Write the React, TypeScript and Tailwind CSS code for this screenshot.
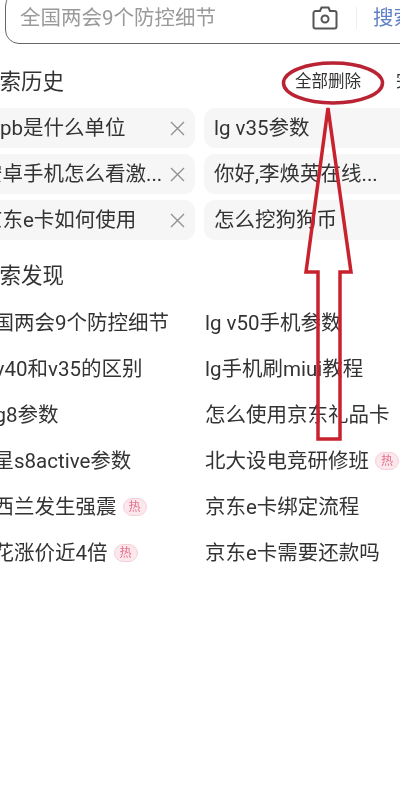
const history = [
  ["mpb是什么单位", "lg v35参数"],
  ["安卓手机怎么看激...", "你好,李焕英在线..."],
  ["京东e卡如何使用", "怎么挖狗狗币"],
];

const found: [string, boolean, string, boolean][] = [
  ["全国两会9个防控细节", false, "lg v50手机参数", false],
  ["lg v40和v35的区别", false, "lg手机刷miui教程", false],
  ["lg g8参数", false, "怎么使用京东礼品卡", false],
  ["三星s8active参数", false, "北大设电竞研修班", true],
  ["新西兰发生强震", true, "京东e卡绑定流程", false],
  ["葱花涨价近4倍", true, "京东e卡需要还款吗", false],
];

const Hot = () => (
  <span className="ml-[6px] flex h-[18px] w-[24px] shrink-0 items-center justify-center rounded-full border border-[#f7cfd9] bg-[#fbe8ed] text-[12px] text-[#e5708e]">
    热
  </span>
);

const Close = () => (
  <svg width="15" height="15" viewBox="0 0 15 15" className="shrink-0 text-[#8f8f8f]">
    <path d="M1 1 14 14M14 1 1 14" stroke="currentColor" strokeWidth="1.3" fill="none" />
  </svg>
);

const App = () => {
  return (
    <div
      className="relative h-[789px] w-[400px] overflow-hidden bg-white text-[20.5px] text-[#333]"
      style={{ fontFamily: 'Roboto, "Noto Sans CJK SC", sans-serif' }}
    >
      <div className="-ml-[27px] -mt-[8px] w-[500px] blur-[0.35px]">
        {/* search bar, runs off the top and right of the shot */}
        <div className="ml-[32px] flex h-[52px] w-[420px] items-center rounded-[14px] border-[1.5px] border-[#666] pl-[14px] pr-[10px]">
          <span className="text-[#9a9a9a]">全国两会9个防控细节</span>
          <svg width="26" height="24" viewBox="0 0 26 24" className="ml-auto shrink-0 text-[#555]">
            <path
              d="M3.5 5H8l1.5-3.5h7L18 5h4.500a2 2 0 0 1 2 2v13.500a2 2 0 0 1-2 2h-19a2 2 0 0 1-2-2V7a2 2 0 0 1 2-2Z"
              fill="none"
              stroke="currentColor"
              strokeWidth="2"
              strokeLinejoin="round"
            />
            <circle cx="13" cy="13" r="3.500" fill="none" stroke="currentColor" strokeWidth="2" />
          </svg>
          <div className="ml-[18px] h-[22px] w-px bg-[#eee]" />
          <span className="ml-[16px] whitespace-nowrap text-[#5f7fc8]">搜索</span>
        </div>

        <div className="mt-[23px] flex h-[30px] w-[456px] items-center pl-[5px]">
          <span className="text-[21.5px]">搜索历史</span>
          <span className="ml-auto text-[16.5px]">全部删除</span>
          <span className="ml-[35px] text-[16.5px]">完成</span>
        </div>

        <div className="mt-[11px] grid grid-cols-[222px_222px] gap-x-[9px] gap-y-[6px]">
          {history.map(([left, right]) => (
            <div key={left} className="contents">
              <div className="flex h-[40px] items-center rounded-[11px] bg-[#f6f6f6] pl-[9px] pr-[10px]">
                <span className="whitespace-nowrap">{left}</span>
                <span className="ml-auto">
                  <Close />
                </span>
              </div>
              <div className="flex h-[40px] items-center rounded-[11px] bg-[#f6f6f6] pl-[10px]">
                <span className="whitespace-nowrap">{right}</span>
              </div>
            </div>
          ))}
        </div>

        <div className="mt-[21px] h-[30px] pl-[5px] text-[21.5px] leading-[30px]">搜索发现</div>

        <div className="mt-[9px] grid grid-cols-[232px_226px]">
          {found.map(([left, leftHot, right, rightHot]) => (
            <div key={left} className="contents">
              <div className="flex h-[46px] items-center whitespace-nowrap">
                {left}
                {leftHot && <Hot />}
              </div>
              <div className="flex h-[46px] items-center whitespace-nowrap">
                {right}
                {rightHot && <Hot />}
              </div>
            </div>
          ))}
        </div>
      </div>

      {/* red annotation drawn over the screenshot */}
      <svg width="400" height="789" viewBox="0 0 400 789" className="absolute left-0 top-0" fill="none">
        <ellipse cx="333" cy="83" rx="49.500" ry="20" stroke="#b92334" strokeWidth="3.500" />
        <path
          d="M328 108 306 272H318V439H340V272H351Z"
          stroke="#c8222f"
          strokeWidth="3.500"
          strokeLinejoin="miter"
        />
      </svg>
    </div>
  );
};

export default App;
